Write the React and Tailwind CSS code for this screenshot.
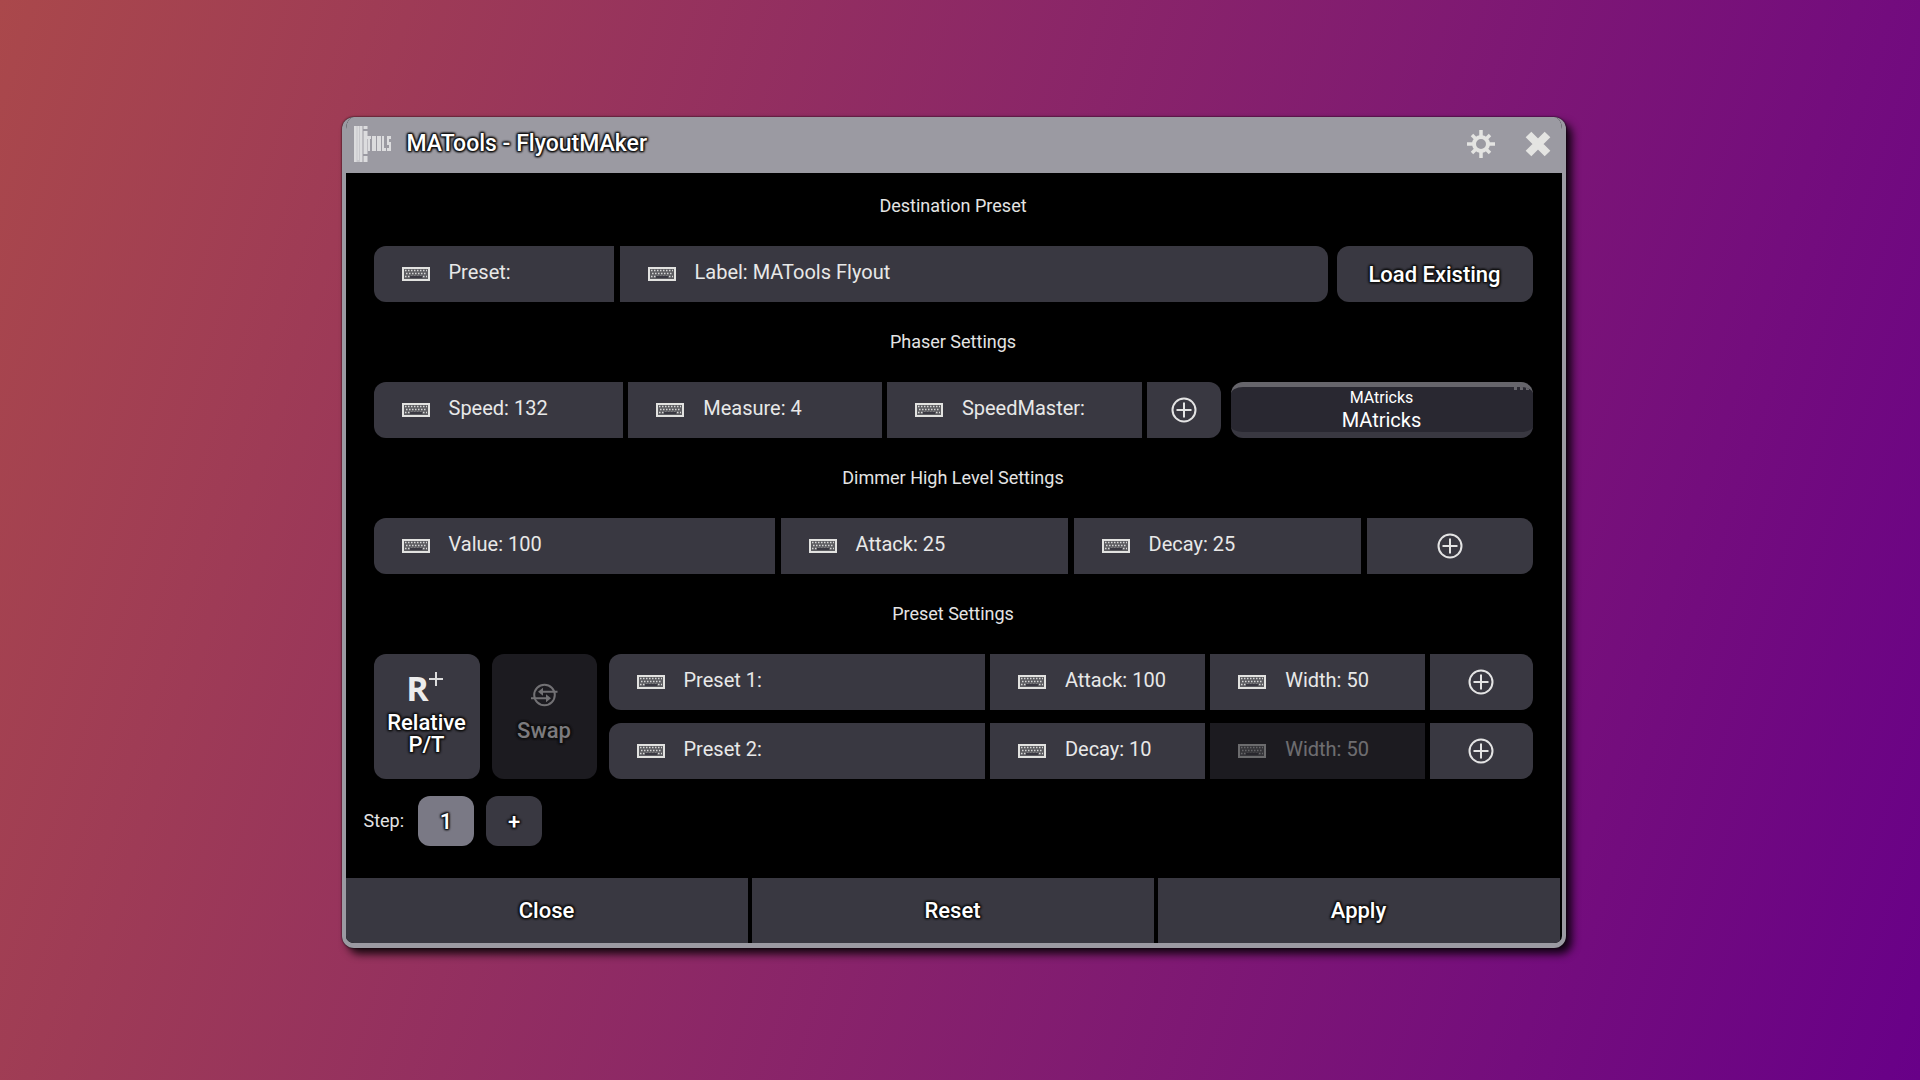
const outline = "[text-shadow:0_0_2px_#111,0_0_3px_#111,1px_1px_2px_#111,-1px_-1px_2px_#111,1px_-1px_2px_#111,-1px_1px_2px_#111]";

function KeyboardIcon() {
  return (
    <svg viewBox="0 0 28 14" className="w-7 h-[14px]" aria-hidden="true">
      <rect x="0" y="0" width="28" height="14" fill="#e2e2e0" />
      <rect x="2" y="2" width="24" height="10" fill="#5c5c60" />
      <path d="M3 3.5h22M4 6.5h21M3 9.5h22" stroke="#d6d6d6" strokeWidth="1.6" strokeDasharray="1.5 1.5" />
      <rect x="8" y="9" width="12" height="2" fill="#3a3942" />
    </svg>
  );
}

function PlusCircle() {
  return (
    <svg viewBox="0 0 26 26" className="w-[26px] h-[26px]" fill="none" stroke="#e4e4e4" strokeWidth="2" aria-hidden="true">
      <circle cx="13" cy="13" r="11.5" />
      <path d="M13 5.500v15M5.500 13h15" />
    </svg>
  );
}

function SwapIcon() {
  return (
    <svg viewBox="0 0 27 24" className="w-[27px] h-6" fill="none" stroke="#727174" strokeWidth="2" aria-hidden="true">
      <circle cx="13.5" cy="12" r="10.3" />
      <path d="M26.500 8.700H9M0 15.300h18" />
      <path d="M7 8.700l5-4v8zM20 15.300l-5-4v8z" fill="#727174" stroke="none" />
    </svg>
  );
}

function RelativeIcon() {
  return (
    <span className="flex items-start mr-1 mb-2 text-[#ececec] [text-shadow:none]" aria-hidden="true">
      <span className="font-['Open_Sans'] font-bold text-[34px] leading-8">R</span>
      <svg viewBox="0 0 14 14" className="w-[14px] h-[14px]" stroke="#dcdcdc" strokeWidth="2">
        <path d="M7 0v14M0 7h14" />
      </svg>
    </span>
  );
}

function Logo() {
  return (
    <svg viewBox="0 0 38 38" className="w-[38px] h-[38px]" fill="#dcdcde" aria-hidden="true">
      <path d="M0 1h8v36H0z" opacity="0.7" />
      <path d="M0 1h2.500v36H0zM3.500 1h1.500v34H3.500zM6 1h2.500v36H6z" />
      <path d="M9.500 1h4v3h-4zM9.500 6h4v23h-4zM9.500 31h4v6h-4z" />
      <path d="M13 11h4v3h-1v12h-2V14h-1zM18 11h4v15h-4zM23 11h4v15h-4zM28 11h2v12h2v3h-4zM33 11h4v3h-2v3h2v9h-4v-3h2v-3h-2z" />
    </svg>
  );
}

function GearIcon() {
  return (
    <svg viewBox="0 0 28 28" className="w-7 h-7" fill="none" stroke="#e4e4e2" aria-hidden="true">
      <circle cx="14" cy="14" r="7" strokeWidth="4" />
      <path d="M14 0v6M14 22v6M0 14h6M22 14h6M5 5l4 4M19 19l4 4M23 5l-4 4M9 19l-4 4" strokeWidth="3.5" />
    </svg>
  );
}

function CloseIcon() {
  return (
    <svg viewBox="0 0 26 26" className="w-[26px] h-[26px]" stroke="#e4e4e2" strokeWidth="8" aria-hidden="true">
      <path d="M3.500 3.500l19 19M22.500 3.500l-19 19" />
    </svg>
  );
}

function Heading({ children, className = "pt-[26px]" }) {
  return <h2 className={`pb-[26px] text-center text-lg leading-7 text-[#e4e4e4] ${className}`}>{children}</h2>;
}

function Field({ label, className = "", disabled = false }) {
  return (
    <button
      type="button"
      disabled={disabled}
      className={`h-14 min-w-0 flex items-center pl-7 pb-1 text-xl whitespace-nowrap ${className} ${
        disabled ? "bg-[#1c1b20]" : "bg-[#393841]"
      }`}
    >
      <span className={`flex items-center gap-[19px] ${disabled ? "opacity-40" : ""}`}>
        <span className="pt-1">
          <KeyboardIcon />
        </span>
        <span className="text-[#e8e8e8]">{label}</span>
      </span>
    </button>
  );
}

function AddButton({ label }) {
  return (
    <button type="button" aria-label={label} className="h-14 flex items-center justify-center rounded-r-xl bg-[#393841]">
      <PlusCircle />
    </button>
  );
}

export default function App() {
  return (
    <main className="min-h-screen flex items-center justify-center pr-[13px] pb-[15px] bg-[linear-gradient(108deg,#aa484b,#680088)] font-[Roboto,sans-serif] text-white">
      <section className="w-full max-w-[1224px] rounded-xl overflow-hidden border-4 border-t-0 border-b-[5px] border-[#9b9aa2] bg-black shadow-[6px_6px_9px_rgba(0,0,0,0.85),0_0_2px_#000]">
        <header className="h-14 flex items-center gap-[15px] pl-2 pr-[11px] pb-[2px] bg-[#9b9aa2]">
          <Logo />
          <h1 className={`flex-1 text-[23px] font-medium ${outline}`}>MATools - FlyoutMAker</h1>
          <button type="button" aria-label="Settings" className="mr-[15px]">
            <GearIcon />
          </button>
          <button type="button" aria-label="Close window">
            <CloseIcon />
          </button>
        </header>

        <div className="pl-7 pr-[29px]">
          <Heading className="pt-[19px]">Destination Preset</Heading>
          <div className="flex gap-[9px]">
            <div className="flex-1 grid grid-cols-[240fr_708fr] gap-[6px]">
              <Field label="Preset:" className="rounded-l-xl" />
              <Field label="Label: MATools Flyout" className="rounded-r-xl" />
            </div>
            <button type="button" className={`w-[196px] h-14 rounded-xl bg-[#393841] text-[22px] font-medium ${outline}`}>
              Load Existing
            </button>
          </div>

          <Heading>Phaser Settings</Heading>
          <div className="flex gap-[9px]">
            <div className="flex-1 grid grid-cols-[250fr_254fr_255fr_75fr] gap-[5px]">
              <Field label="Speed: 132" className="rounded-l-xl" />
              <Field label="Measure: 4" />
              <Field label="SpeedMaster:" />
              <AddButton label="Add speed master" />
            </div>
            <button
              type="button"
              className="relative w-[302px] h-14 rounded-xl overflow-hidden border-t-[5px] border-b-[6px] border-t-[#66656b] border-b-[#393841] bg-[#292831]"
            >
              <span className="absolute top-0 right-1 flex gap-[3px]" aria-hidden="true">
                <span className="size-[3px] bg-[#66656b]" />
                <span className="size-[3px] bg-[#66656b]" />
                <span className="size-[3px] bg-[#66656b]" />
              </span>
              <span className="block text-base leading-5">MAtricks</span>
              <span className="block text-xl leading-6">MAtricks</span>
            </button>
          </div>

          <Heading>Dimmer High Level Settings</Heading>
          <div className="grid grid-cols-[401fr_287fr_287fr_166fr] gap-[6px]">
            <Field label="Value: 100" className="rounded-l-xl" />
            <Field label="Attack: 25" />
            <Field label="Decay: 25" />
            <AddButton label="Add dimmer value" />
          </div>

          <Heading>Preset Settings</Heading>
          <div className="flex gap-3">
            <button
              type="button"
              className={`w-[106px] flex flex-col items-center justify-center pb-[6px] rounded-xl bg-[#393841] text-[22px] leading-[22px] font-medium ${outline}`}
            >
              <RelativeIcon />
              <span>
                Relative
                <br />
                P/T
              </span>
            </button>
            <button
              type="button"
              disabled
              className={`w-[105px] flex flex-col items-center justify-center gap-3 pb-2 rounded-xl bg-[#1c1b20] text-[22px] leading-6 font-medium text-[#7c7b7e] ${outline}`}
            >
              <SwapIcon />
              Swap
            </button>
            <div className="flex-1 flex flex-col gap-[13px]">
              <div className="grid grid-cols-[376fr_215fr_215fr_102fr] gap-[5px]">
                <Field label="Preset 1:" className="rounded-l-xl" />
                <Field label="Attack: 100" />
                <Field label="Width: 50" />
                <AddButton label="Add preset 1" />
              </div>
              <div className="grid grid-cols-[376fr_215fr_215fr_102fr] gap-[5px]">
                <Field label="Preset 2:" className="rounded-l-xl" />
                <Field label="Decay: 10" />
                <Field label="Width: 50" disabled />
                <AddButton label="Add preset 2" />
              </div>
            </div>
          </div>
        </div>

        <div className="flex items-center gap-3 pl-[18px] pt-[17px] pb-8">
          <span className="pr-[2px] text-lg text-[#e4e4e4]">Step:</span>
          <button
            type="button"
            aria-pressed="true"
            className={`w-14 h-[50px] rounded-xl bg-[#7a7985] text-[22px] font-medium ${outline}`}
          >
            1
          </button>
          <button type="button" aria-label="Add step" className={`w-14 h-[50px] rounded-xl bg-[#393841] text-[22px] font-medium ${outline}`}>
            +
          </button>
        </div>

        <footer className="grid grid-cols-3 gap-1 pr-[2px]">
          <button type="button" className={`h-[65px] bg-[#393841] text-[22px] font-medium ${outline}`}>Close</button>
          <button type="button" className={`h-[65px] bg-[#393841] text-[22px] font-medium ${outline}`}>Reset</button>
          <button type="button" className={`h-[65px] bg-[#393841] text-[22px] font-medium ${outline}`}>Apply</button>
        </footer>
      </section>
    </main>
  );
}
